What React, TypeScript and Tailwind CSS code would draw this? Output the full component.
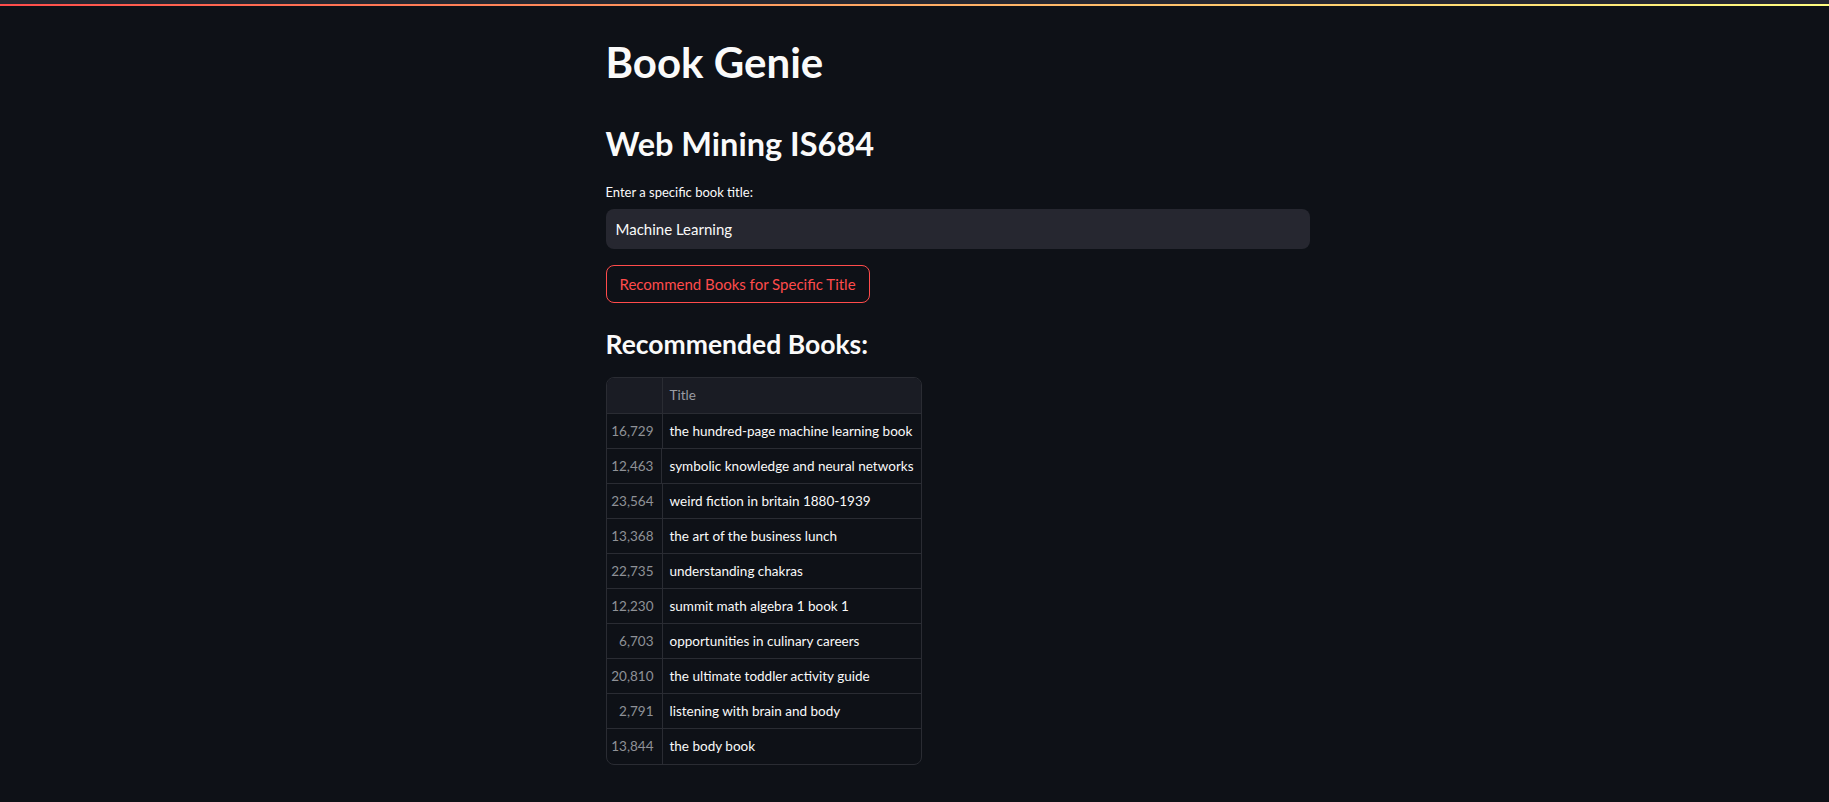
const books: [string, string][] = [
  ["16,729", "the hundred-page machine learning book"],
  ["12,463", "symbolic knowledge and neural networks"],
  ["23,564", "weird fiction in britain 1880-1939"],
  ["13,368", "the art of the business lunch"],
  ["22,735", "understanding chakras"],
  ["12,230", "summit math algebra 1 book 1"],
  ["6,703", "opportunities in culinary careers"],
  ["20,810", "the ultimate toddler activity guide"],
  ["2,791", "listening with brain and body"],
  ["13,844", "the body book"],
]

export default function App() {
  return (
    <div className="min-h-screen bg-[#0e1117] text-[#fafafa] font-['Lato',sans-serif]">
      {/* top decoration */}
      <div className="h-[4px] bg-[#262730]" />
      <div className="h-[2px] bg-gradient-to-r from-[#ff4b4b] to-[#fffd80]" />

      <div className="pl-[86px]">
        <main className="mx-auto w-[704px] flex flex-col pt-[30px] pb-10">
          <h1 className="text-[42px] leading-[52px] font-bold">Book Genie</h1>
          <h2 className="mt-[34px] text-[32.5px] leading-[44px] font-bold">Web Mining IS684</h2>

          <label className="mt-[16px] text-[13px] leading-[20px]">Enter a specific book title:</label>
          <div className="mt-[7px] h-[40px] rounded-lg bg-[#262730] flex items-center px-[10px] text-[15px]">
            Machine Learning
          </div>

          <div className="mt-[16px]">
            <button className="h-[38px] px-[13px] rounded-lg border border-[#ff4b4b] text-[#ff4b4b] text-[15px] bg-transparent">
              Recommend Books for Specific Title
            </button>
          </div>

          <h3 className="mt-[23px] text-[26.5px] leading-[36px] font-bold">Recommended Books:</h3>

          {/* dataframe */}
          <div className="mt-[15px] w-[316px] rounded-lg border border-[#2a2c33] overflow-hidden text-[13.5px]">
            <div className="flex h-[36px] bg-[#1a1c24] border-b border-[#2a2c33]">
              <div className="w-[56px] border-r border-[#2a2c33]" />
              <div className="flex-1 flex items-center px-[7px] text-[#9a9ca3]">Title</div>
            </div>
            {books.map(([idx, title], i) => (
              <div
                key={idx}
                className={
                  i < books.length - 1
                    ? "flex h-[35px] border-b border-[#2a2c33]"
                    : "flex h-[35px]"
                }
              >
                <div className="w-[56px] border-r border-[#2a2c33] flex items-center justify-end pr-[8px] text-[#8f9197]">
                  {idx}
                </div>
                <div className="flex-1 flex items-center px-[7px] whitespace-nowrap">{title}</div>
              </div>
            ))}
          </div>
        </main>
      </div>
    </div>
  )
}
